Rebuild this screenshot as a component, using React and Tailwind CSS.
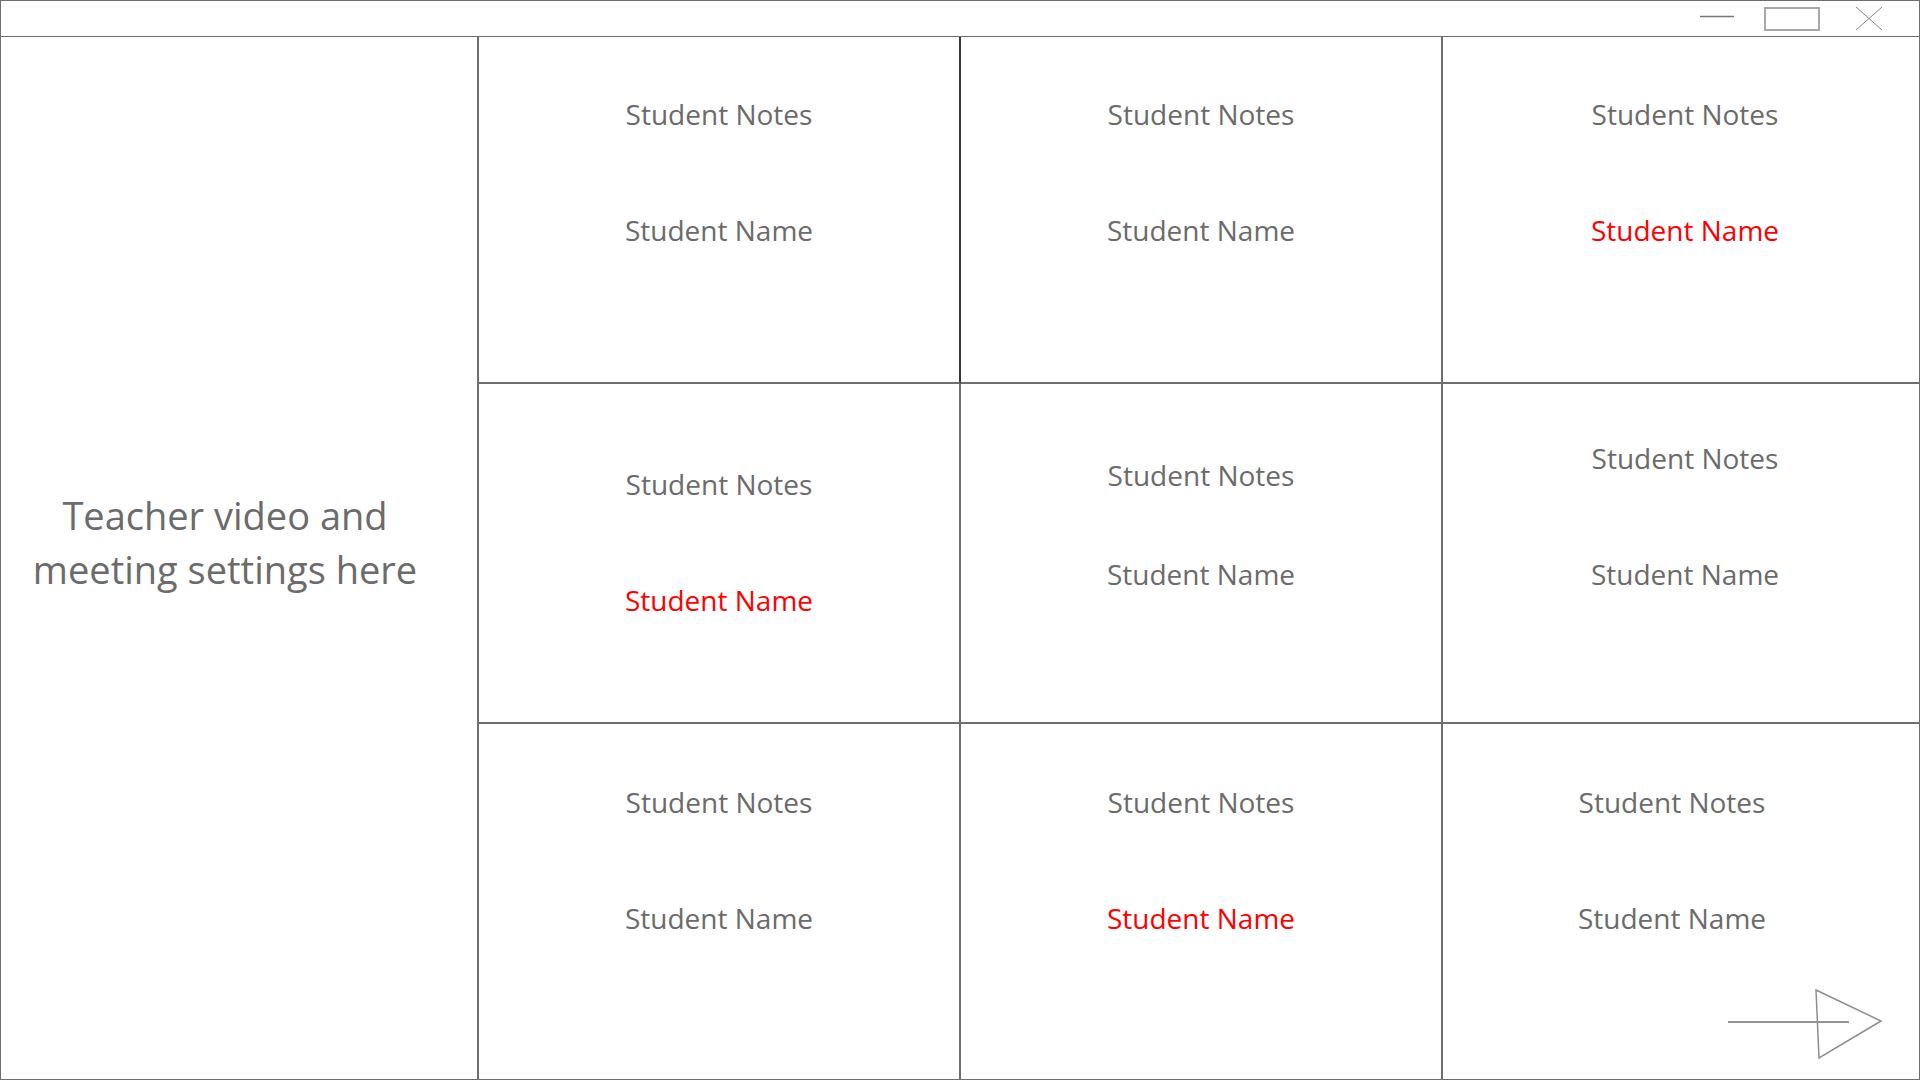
import React from 'react';

const font = { fontFamily: '"Open Sans", "Noto Sans", sans-serif' };

const cells = [
  { name: false, pad: 'pt-[59px]', gap: 'gap-[80px]', border: 'border-r-2 border-b-2 border-r-[#3a3a3a]' },
  { name: false, pad: 'pt-[59px]', gap: 'gap-[80px]', border: 'border-r-2 border-b-2' },
  { name: true, pad: 'pt-[59px] pl-[8px]', gap: 'gap-[80px]', border: 'border-b-2' },
  { name: true, pad: 'pt-[82px]', gap: 'gap-[80px]', border: 'border-r-2 border-b-2' },
  { name: false, pad: 'pt-[73px]', gap: 'gap-[63px]', border: 'border-r-2 border-b-2' },
  { name: false, pad: 'pt-[56px] pl-[8px]', gap: 'gap-[80px]', border: 'border-b-2' },
  { name: false, pad: 'pt-[60px]', gap: 'gap-[80px]', border: 'border-r-2' },
  { name: true, pad: 'pt-[60px]', gap: 'gap-[80px]', border: 'border-r-2' },
  { name: false, pad: 'pt-[60px] pr-[18px]', gap: 'gap-[80px]', border: '', arrow: true },
];

const TitleBar = () => (
  <div className="flex h-[36px] shrink-0 items-start justify-end border-b border-[#6e6e6e] pr-[36px]">
    <svg width="34" height="35" className="mr-[30px]">
      <line x1="0" y1="15.5" x2="34" y2="15.5" stroke="#777" strokeWidth="1.6" />
    </svg>
    <svg width="56" height="35" className="mr-[35px]">
      <rect x="1" y="7" width="54" height="22" fill="none" stroke="#a9a9a9" strokeWidth="2" />
    </svg>
    <svg width="28" height="35">
      <line x1="1" y1="6" x2="27" y2="29" stroke="#8a8a8a" strokeWidth="1" />
      <line x1="27" y1="6" x2="1" y2="29" stroke="#8a8a8a" strokeWidth="1" />
    </svg>
  </div>
);

const NextArrow = () => (
  <svg width="170" height="80" className="absolute left-[276px] top-[261px]">
    <line x1="9" y1="37" x2="130" y2="37" stroke="#707070" strokeWidth="1.5" />
    <polygon points="97,5 162,36 100,73" fill="none" stroke="#8e8e8e" strokeWidth="1.5" />
  </svg>
);

export default function App() {
  return (
    <div
      className="flex h-[1080px] w-[1920px] flex-col border border-[#6e6e6e] bg-white text-[#6b6b6b]"
      style={font}
    >
      <TitleBar />
      <div className="flex min-h-0 flex-1">
        <div className="flex w-[478px] shrink-0 flex-col items-center justify-center border-r-2 border-[#6e6e6e] pb-[32px] pr-[28px]">
          <p className="text-center text-[38px] leading-[54px]">
            Teacher video and
            <br />
            meeting settings here
          </p>
        </div>
        <div className="grid flex-1 grid-cols-[482px_482px_1fr] grid-rows-[347px_340px_1fr]">
          {cells.map((c, i) => (
            <div
              key={i}
              className={`relative flex flex-col items-center border-[#6e6e6e] text-[28px] leading-[36px] ${c.pad} ${c.gap} ${c.border}`}
            >
              <span>Student Notes</span>
              <span className={c.name ? 'text-[#ff0000]' : ''}>Student Name</span>
              {c.arrow && <NextArrow />}
            </div>
          ))}
        </div>
      </div>
    </div>
  );
}
